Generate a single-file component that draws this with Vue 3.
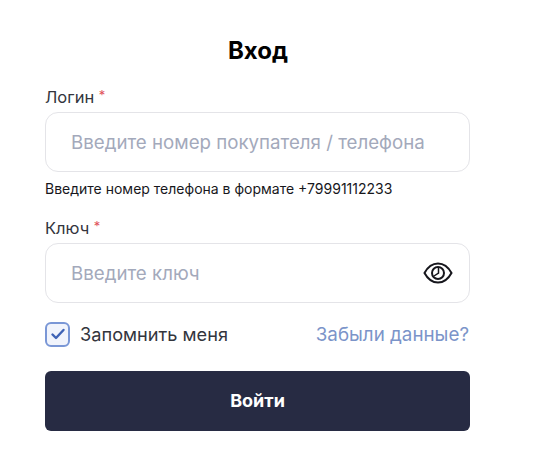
<script setup>
const fields = { login: "Введите номер покупателя / телефона", key: "Введите ключ" };
</script>

<template>
  <div class="page">
    <h1 class="title">Вход</h1>

    <div class="label">Логин <span class="req">*</span></div>
    <div class="input">
      <span class="placeholder">{{ fields.login }}</span>
    </div>
    <div class="hint">Введите номер телефона в формате +79991112233</div>

    <div class="label second">Ключ <span class="req">*</span></div>
    <div class="input">
      <span class="placeholder">{{ fields.key }}</span>
      <svg class="eye" width="30" height="24" viewBox="0 0 30 24" fill="none" stroke="#16161c" stroke-width="2">
        <path d="M1.500 12C5 5.500 9.500 2.500 15 2.500S25 5.500 28.500 12c-3.500 6.500-8 9.500-13.500 9.500S5 18.500 1.500 12Z" />
        <circle cx="15" cy="12" r="6" />
        <path d="M15.500 6.500V12l-4.500 3" stroke-width="1.500" />
      </svg>
    </div>

    <div class="options">
      <div class="remember">
        <span class="check">
          <svg width="16" height="13" viewBox="0 0 16 13" fill="none" stroke="#3f63b5" stroke-width="2.400" stroke-linecap="round" stroke-linejoin="round">
            <path d="M2.500 6.500l3.500 3.500 7.500-8" />
          </svg>
        </span>
        <span>Запомнить меня</span>
      </div>
      <a class="forgot">Забыли данные?</a>
    </div>

    <button class="submit">Войти</button>
  </div>
</template>

<style>
body {
  background: #fff;
}
</style>

<style scoped>
.page {
  width: 533px;
  height: 475px;
  box-sizing: border-box;
  padding: 35px 63px 0 45px;
  font-family: "Inter", "Liberation Sans", sans-serif;
  display: flex;
  flex-direction: column;
  color: #33353d;
}

.title {
  margin: 0 0 20px;
  font-size: 24px;
  line-height: 32px;
  font-weight: 700;
  color: #000;
  text-align: center;
  padding-left: 1px;
}

.label {
  font-size: 16.500px;
  line-height: 20px;
  margin-bottom: 5px;
}

.label.second {
  margin-top: 20px;
}

.req {
  color: #e0525a;
  font-size: 13px;
  line-height: 0;
  vertical-align: 3px;
}

.input {
  height: 60px;
  box-sizing: border-box;
  border: 1.500px solid #e4e4e8;
  border-radius: 13px;
  padding: 0 16px 0 25px;
  display: flex;
  align-items: center;
  justify-content: space-between;
}

.placeholder {
  font-size: 18.700px;
  color: #a3a9bb;
  white-space: nowrap;
}

.hint {
  margin-top: 8px;
  font-size: 14px;
  line-height: 18px;
  color: #17171c;
}

.options {
  margin-top: 17px;
  display: flex;
  align-items: center;
  justify-content: space-between;
  height: 28px;
  font-size: 18.200px;
}

.remember {
  display: flex;
  align-items: center;
  gap: 10px;
}

.check {
  width: 25px;
  height: 25px;
  box-sizing: border-box;
  border: 2.500px solid #7a97d6;
  border-radius: 6px;
  background: #f1f4fc;
  display: flex;
  align-items: center;
  justify-content: center;
}

.forgot {
  font-size: 18.800px;
  color: #7b94c9;
  padding-right: 1px;
}

.submit {
  margin-top: 23px;
  height: 60px;
  padding: 0 0 2px;
  border: none;
  border-radius: 6px;
  background: #272b43;
  color: #fff;
  font-family: inherit;
  font-size: 18px;
  font-weight: 700;
}
</style>
